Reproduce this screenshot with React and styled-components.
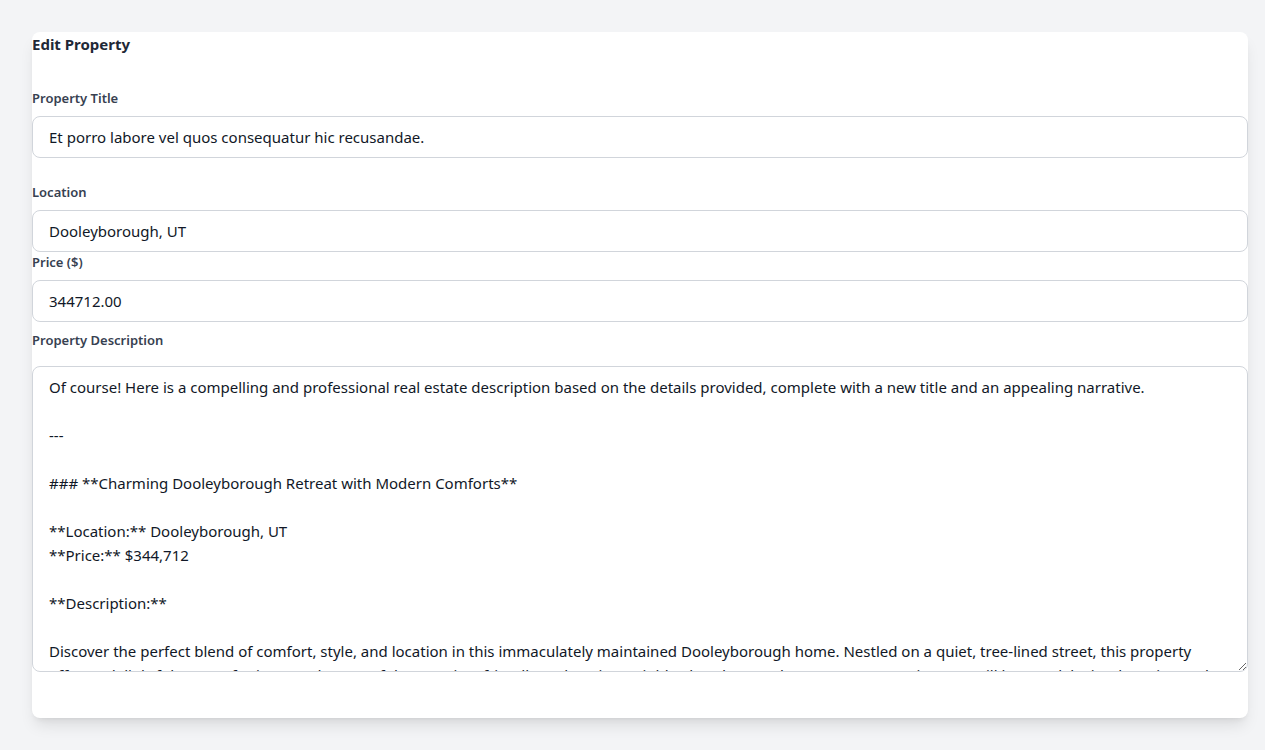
import React from "react"
import styled, { createGlobalStyle } from "styled-components"

const GlobalStyle = createGlobalStyle`
  html, body {
    margin: 0;
    padding: 0;
    background: #f3f4f6;
    font-family: "Noto Sans", "Open Sans", sans-serif;
  }
  * {
    box-sizing: border-box;
  }
`

const description = `Of course! Here is a compelling and professional real estate description based on the details provided, complete with a new title and an appealing narrative.

---

### **Charming Dooleyborough Retreat with Modern Comforts**

**Location:** Dooleyborough, UT
**Price:** $344,712

**Description:**

Discover the perfect blend of comfort, style, and location in this immaculately maintained Dooleyborough home. Nestled on a quiet, tree-lined street, this property offers a delightful sense of privacy and a peaceful retreat in a friendly, welcoming neighborhood. From the moment you arrive, you will be struck by its charming curb appeal and the mature landscaping that frames the home.`

const fields = [
  { label: "Property Title", value: "Et porro labore vel quos consequatur hic recusandae.", gap: 26 },
  { label: "Location", value: "Dooleyborough, UT", gap: 2 },
  { label: "Price ($)", value: "344712.00", gap: 10 },
]

const App = () => {
  return (
    <Page>
      <GlobalStyle />
      <Card>
        <Heading>Edit Property</Heading>
        {fields.map(f => (
          <Field key={f.label} gap={f.gap}>
            <Label>{f.label}</Label>
            <Input defaultValue={f.value} />
          </Field>
        ))}
        <Field gap={0}>
          <Label spacing={18}>Property Description</Label>
          <TextArea defaultValue={description} />
        </Field>
      </Card>
    </Page>
  )
}

export default App

const Page = styled.div`
  min-height: 750px;
  padding: 32px 17px 32px 32px;
`

const Card = styled.div`
  background: #ffffff;
  border-radius: 8px;
  box-shadow: 0 10px 15px -3px rgba(0, 0, 0, 0.1),
    0 4px 6px -4px rgba(0, 0, 0, 0.1);
  padding: 0 0 46px 0;
  display: flex;
  flex-direction: column;
`

const Heading = styled.h2`
  margin: 0 0 34px 0;
  font-size: 15px;
  line-height: 24px;
  font-weight: 700;
  color: #1f2937;
`

const Field = styled.div`
  display: flex;
  flex-direction: column;
  margin-bottom: ${props => props.gap}px;
`

const Label = styled.label`
  font-size: 13px;
  line-height: 16px;
  font-weight: 600;
  color: #374151;
  margin-bottom: ${props => props.spacing || 10}px;
`

const Input = styled.input`
  height: 42px;
  width: 100%;
  border: 1px solid #d1d5db;
  border-radius: 8px;
  padding: 0 16px;
  font-family: inherit;
  font-size: 15px;
  color: #111827;
  background: #ffffff;
  outline: none;
`

const TextArea = styled.textarea`
  height: 306px;
  width: 100%;
  border: 1px solid #d1d5db;
  border-radius: 8px;
  padding: 8px 16px;
  font-family: inherit;
  font-size: 15px;
  line-height: 24px;
  color: #111827;
  background: #ffffff;
  outline: none;
  overflow: hidden;
  resize: vertical;
`
